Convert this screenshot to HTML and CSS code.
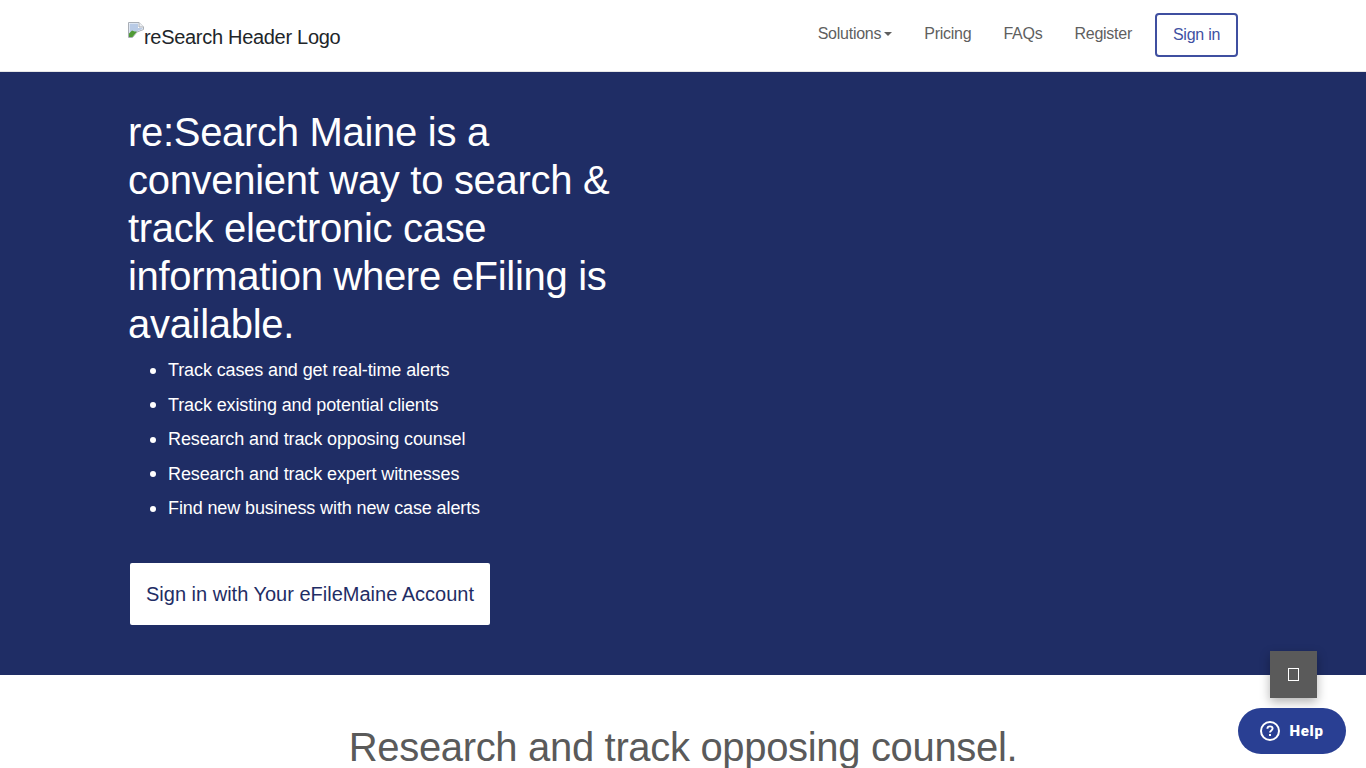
FILE: index.html
```html
<!DOCTYPE html>
<html lang="en">
<head>
    <meta charset="UTF-8">
    <meta name="viewport" content="width=device-width, initial-scale=1.0">
    <title>re:Search Maine</title>
    <link rel="stylesheet" href="styles.css">
</head>
<body>
    <header class="navbar">
        <div class="container nav-row">
            <a class="brand" href="#">
                <svg class="broken-img" width="16" height="16" viewBox="0 0 16 16">
                    <path d="M0.5 0.5H11L15.5 5V7.5L9 10L4.5 15.5H0.5Z" fill="#fff" stroke="#a9aeb6"/>
                    <path d="M11 0.5V5H15.5" fill="#eef0f3" stroke="#a9aeb6"/>
                    <path d="M1.5 1.5H10V6H14.5V7L8.5 9.5L4 14.5H1.5Z" fill="#b9cbe6"/>
                    <path d="M1 15V11.5L4 8.5L6.5 9.5L9 9.5L4.5 15Z" fill="#4f9a35"/>
                </svg><span>reSearch Header Logo</span>
            </a>
            <nav class="nav-links">
                <a href="#">Solutions<i class="caret"></i></a>
                <a href="#">Pricing</a>
                <a href="#">FAQs</a>
                <a class="nav-last" href="#">Register</a>
                <a class="btn-signin" href="#">Sign in</a>
            </nav>
        </div>
    </header>

    <section class="hero">
        <div class="container">
            <div class="hero-text">
                <h1>re:Search Maine is a convenient way to search &amp; track electronic case information where eFiling is available.</h1>
                <ul>
                    <li>Track cases and get real-time alerts</li>
                    <li>Track existing and potential clients</li>
                    <li>Research and track opposing counsel</li>
                    <li>Research and track expert witnesses</li>
                    <li>Find new business with new case alerts</li>
                </ul>
                <a class="btn-hero" href="#">Sign in with Your eFileMaine Account</a>
            </div>
        </div>
    </section>

    <section class="feature">
        <h2>Research and track opposing counsel.</h2>
    </section>

    <a class="to-top" href="#"><i class="tofu"></i></a>
    <a class="help" href="#">
        <svg width="20" height="20" viewBox="0 0 20 20">
            <circle cx="10" cy="10" r="9" fill="none" stroke="#fff" stroke-width="2"/>
            <path d="M7.4 7.8C7.4 6.3 8.6 5.4 10 5.4C11.5 5.4 12.6 6.3 12.6 7.6C12.6 9.4 10 9.5 10 11.6" fill="none" stroke="#fff" stroke-width="1.9"/>
            <rect x="9" y="13" width="2" height="2" fill="#fff"/>
        </svg>
        <span>Help</span>
    </a>
</body>
</html>
```

FILE: styles.css
```css
html, body { margin: 0; padding: 0; }
body { font-family: "Liberation Sans", Arial, sans-serif; color: #212529; background: #fff; height: 768px; overflow: hidden; }
a { text-decoration: none; }
.container { width: 1110px; margin: 0 auto; }

.navbar { height: 71px; border-bottom: 1px solid #e6e6e6; background: #fff; }
.nav-row { display: flex; justify-content: space-between; align-items: center; height: 71px; }
.brand { color: #212529; font-size: 20px; line-height: 30px; letter-spacing: -0.3px; display: flex; align-items: flex-start; margin-top: 2px; }
.broken-img { display: block; }
.nav-links { display: flex; align-items: center; }
.nav-links a { color: #5f5f5f; font-size: 16px; letter-spacing: -0.25px; margin-right: 32px; margin-top: -3px; }
.nav-links .nav-last { margin-right: 23px; }
.caret { display: inline-block; margin-left: 3px; vertical-align: 3px; border-top: 4px solid #5f5f5f; border-left: 4px solid transparent; border-right: 4px solid transparent; }
.nav-links .btn-signin { color: #3f51a3; border: 2px solid #3f4fa0; border-radius: 4px; width: 79px; height: 40px; line-height: 40px; text-align: center; margin: 0 0 1px; }

.hero { background: #1f2d65; height: 603px; color: #fff; padding-top: 36px; box-sizing: border-box; }
.hero-text { width: 500px; }
h1 { margin: 0; font-size: 40px; line-height: 48px; font-weight: 400; letter-spacing: -0.3px; }
ul { list-style: none; margin: 5px 0 0; padding-left: 40px; font-size: 18px; line-height: 34.5px; letter-spacing: -0.11px; }
li { display: flex; align-items: center; }
li::before { content: ""; width: 6px; height: 6px; margin: 1px 12px 0 -18px; border-radius: 50%; background: #fff; }
.btn-hero { display: block; width: 360px; height: 62px; line-height: 62px; margin: 37px 0 0 2px; background: #fff; color: #1f2d65; font-size: 20px; text-align: center; border-radius: 2px; }

.feature { text-align: center; }
h2 { margin: 48px 0 0; font-size: 40px; line-height: 48px; font-weight: 400; color: #5a5a5a; letter-spacing: -0.33px; }

.to-top { position: fixed; left: 1270px; top: 651px; width: 47px; height: 47px; background: #5a5a5a; box-shadow: 0 4px 10px rgba(0,0,0,0.3); display: flex; align-items: center; justify-content: center; }
.tofu { display: block; width: 9px; height: 11px; border: 1px solid #fff; }
.help { position: fixed; left: 1238px; top: 708px; width: 108px; height: 46px; border-radius: 23px; background: #293f93; color: #fff; font-family: Roboto, sans-serif; font-weight: 900; font-size: 15px; letter-spacing: 0.7px; display: flex; align-items: center; justify-content: center; gap: 9px; }
.help svg { display: block; }
```
